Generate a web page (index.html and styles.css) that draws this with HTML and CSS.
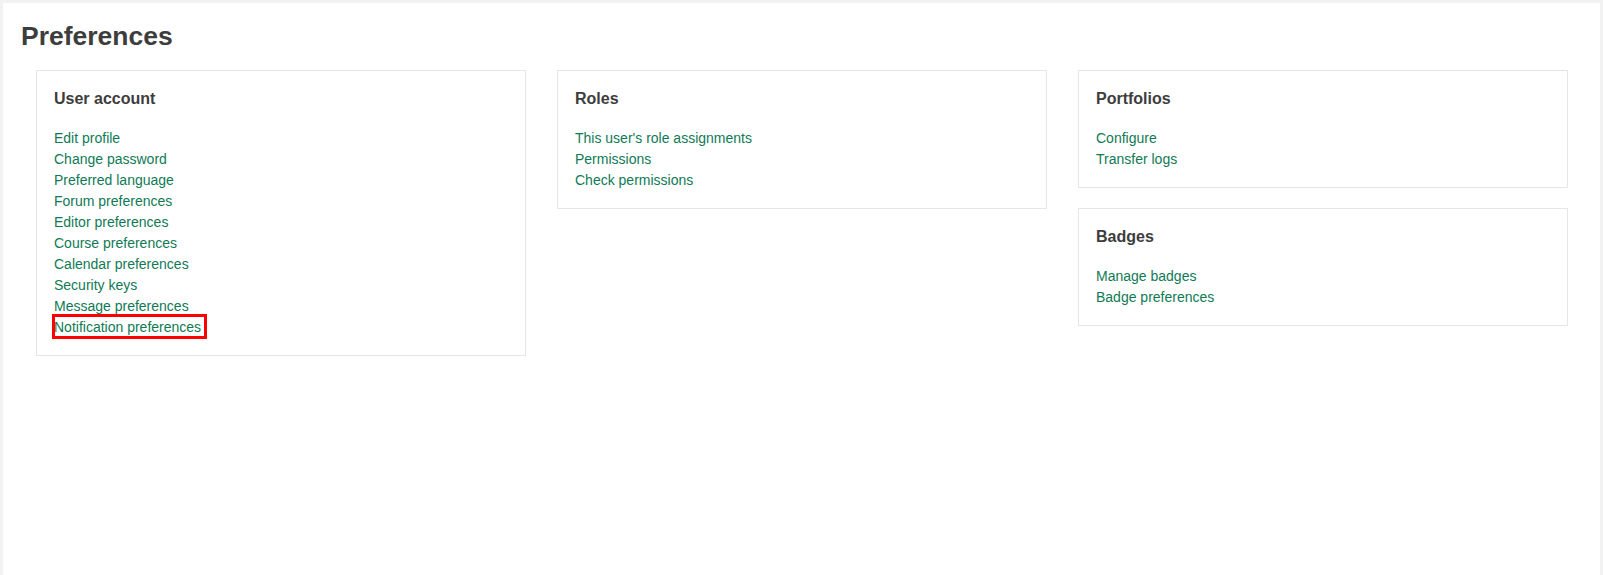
FILE: index.html
```html
<!DOCTYPE html>
<html lang="en">
<head>
    <meta charset="UTF-8">
    <meta name="viewport" content="width=device-width, initial-scale=1.0">
    <title>Preferences</title>
    <link rel="stylesheet" href="styles.css">
</head>
<body>

    <div class="page">
        <h1 class="page-title">Preferences</h1>

        <div class="columns">
            <div class="column">
                <div class="card">
                    <h3>User account</h3>
                    <ul>
                        <li><a href="#">Edit profile</a></li>
                        <li><a href="#">Change password</a></li>
                        <li><a href="#">Preferred language</a></li>
                        <li><a href="#">Forum preferences</a></li>
                        <li><a href="#">Editor preferences</a></li>
                        <li><a href="#">Course preferences</a></li>
                        <li><a href="#">Calendar preferences</a></li>
                        <li><a href="#">Security keys</a></li>
                        <li><a href="#">Message preferences</a></li>
                        <li><a href="#" class="highlight">Notification preferences</a></li>
                    </ul>
                </div>
            </div>

            <div class="column">
                <div class="card">
                    <h3>Roles</h3>
                    <ul>
                        <li><a href="#">This user's role assignments</a></li>
                        <li><a href="#">Permissions</a></li>
                        <li><a href="#">Check permissions</a></li>
                    </ul>
                </div>
            </div>

            <div class="column">
                <div class="card">
                    <h3>Portfolios</h3>
                    <ul>
                        <li><a href="#">Configure</a></li>
                        <li><a href="#">Transfer logs</a></li>
                    </ul>
                </div>
                <div class="card">
                    <h3>Badges</h3>
                    <ul>
                        <li><a href="#">Manage badges</a></li>
                        <li><a href="#">Badge preferences</a></li>
                    </ul>
                </div>
            </div>
        </div>
    </div>

</body>
</html>
```

FILE: styles.css
```css
:root {
    --page-bg: #f2f2f2;
    --panel-bg: #FFFFFF;
    --text-color: #3d3d3d;
    --link-color: #107a55;
    --border-color: #e6e6e6;
}

body {
    font-family: 'Liberation Sans', Arial, sans-serif;
    background-color: var(--page-bg);
    color: var(--text-color);
    margin: 0;
}

.page {
    box-sizing: border-box;
    margin: 3px 3px 0 3px;
    min-height: calc(100vh - 3px);
    padding: 18px 18px 0;
    background-color: var(--panel-bg);
}

.page-title {
    margin: 0 0 17px;
    font-size: 26.5px;
    line-height: 1.2;
    font-weight: bold;
}

.columns {
    display: grid;
    grid-template-columns: repeat(3, 490px);
    column-gap: 31px;
    align-items: start;
    margin-left: 15px;
}

.column {
    display: flex;
    flex-direction: column;
    gap: 20px;
}

.card {
    border: 1px solid var(--border-color);
    padding: 18px 17px 17px;
}

.card h3 {
    margin: 0 0 20px;
    font-size: 16px;
    line-height: 1.2;
    font-weight: bold;
}

.card ul {
    list-style: none;
    margin: 0;
    padding: 0;
    font-size: 14px;
    line-height: 21px;
}

.card a {
    color: var(--link-color);
    text-decoration: none;
}

/* red marker drawn round the selected link */
.highlight {
    position: relative;
}

.highlight::after {
    content: "";
    position: absolute;
    left: -2px;
    top: -5px;
    right: -6px;
    bottom: -4px;
    border: 3px solid #ff0000;
}
```
